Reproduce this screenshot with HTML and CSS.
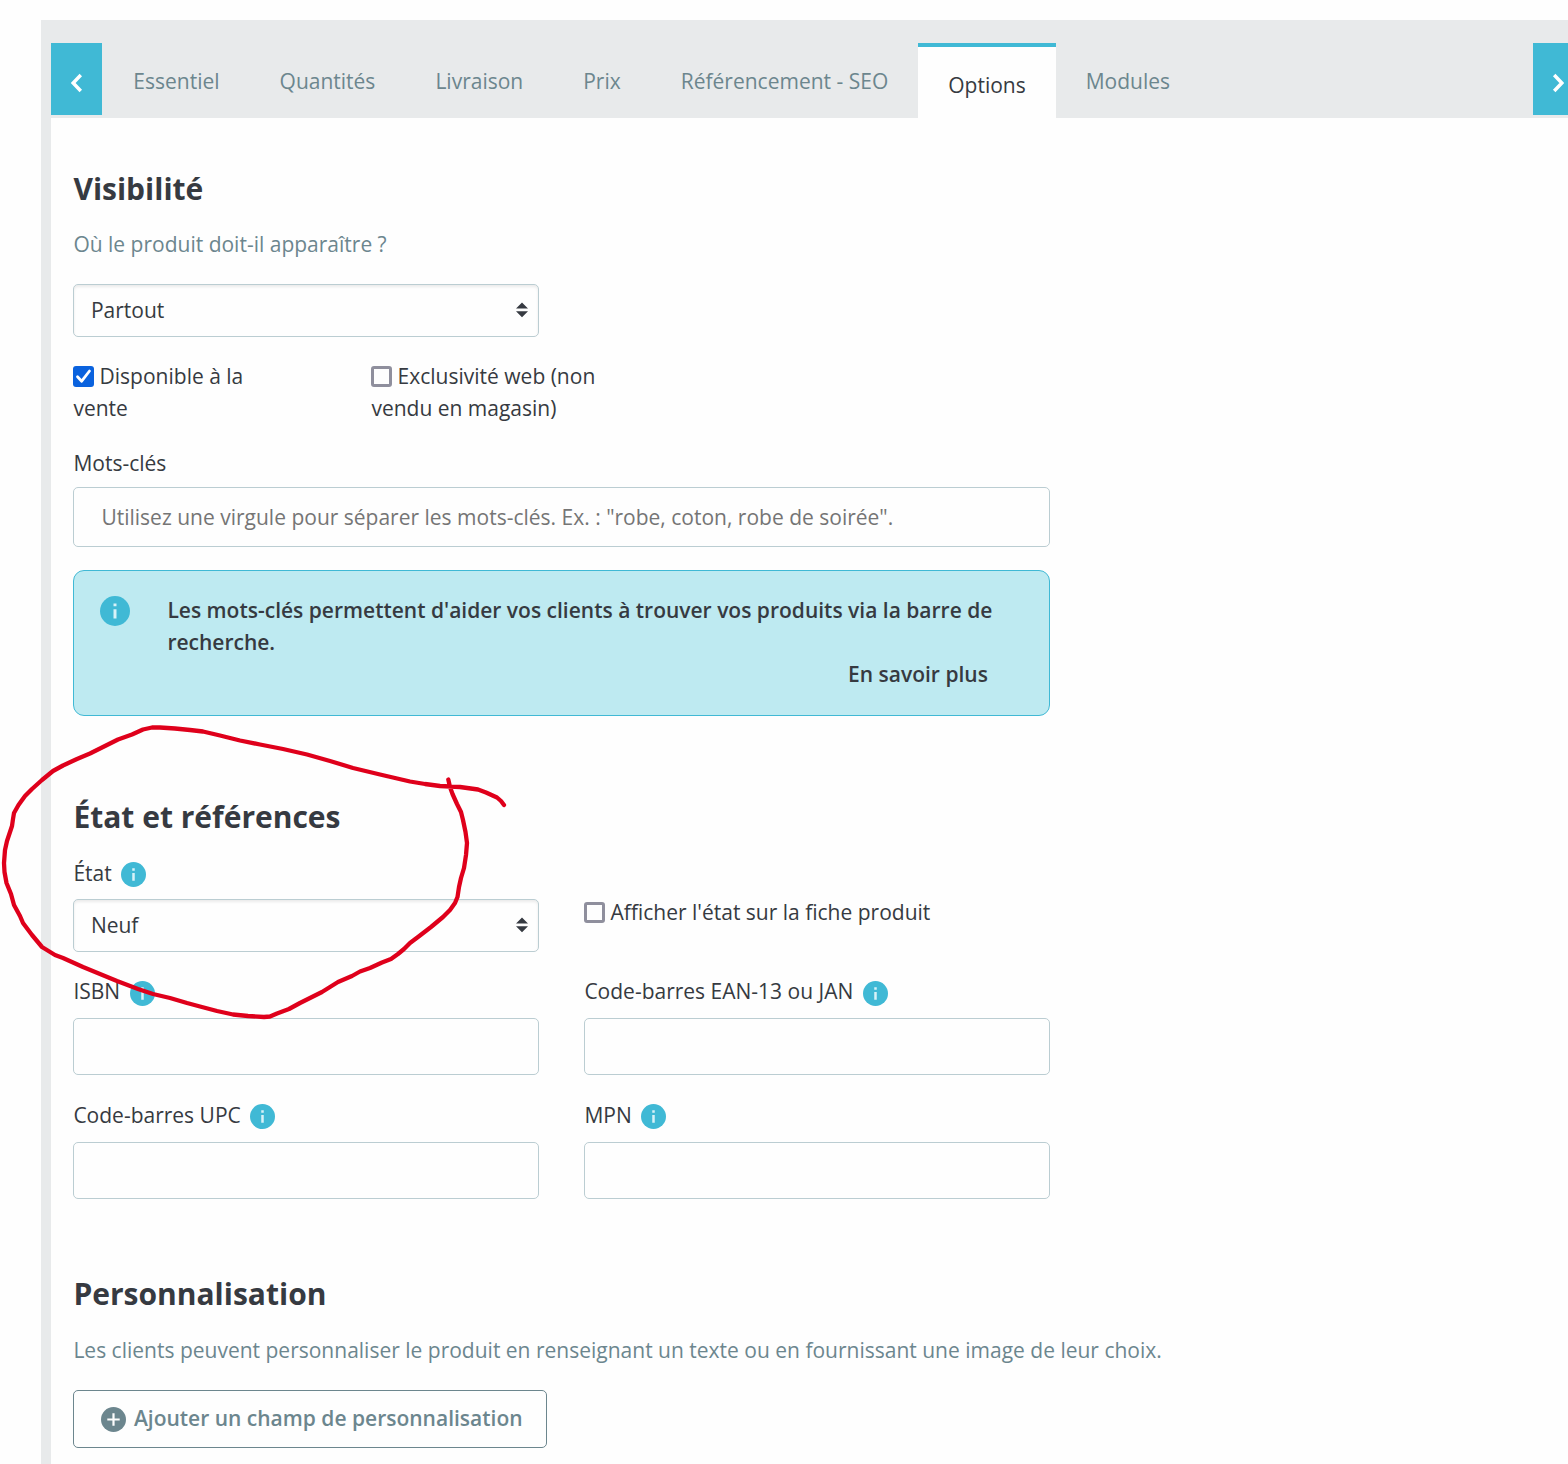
FILE: index.html
```html
<!DOCTYPE html>
<html lang="fr">
<head>
<meta charset="utf-8">
<title>Produit - Options</title>
<link rel="stylesheet" href="styles.css">
</head>
<body>
<svg class="defs" width="0" height="0" aria-hidden="true">
  <symbol id="info" viewBox="2 2 20 20"><circle cx="12" cy="12" r="10" fill="#40b9d5"/><path class="info-mark" d="M11 7h2v1.900h-2zM11 10.800h2V17h-2z"/></symbol>
  <symbol id="sort" viewBox="0 0 12 16"><path d="M6 .5 12 6.500H0zM0 9.300h12L6 15.300z" fill="#363a41"/></symbol>
</svg>
<main class="card">
  <nav class="tabbar">
    <button class="arrow" aria-label="Précédent"><svg width="12" height="20" viewBox="0 0 12 20"><path d="M9.800 2 2.200 10l7.600 8"/></svg></button>
    <div class="tabs">
      <a class="tab">Essentiel</a>
      <a class="tab">Quantités</a>
      <a class="tab">Livraison</a>
      <a class="tab">Prix</a>
      <a class="tab">Référencement - SEO</a>
      <a class="tab active">Options</a>
      <a class="tab">Modules</a>
    </div>
    <button class="arrow next" aria-label="Suivant"><svg width="12" height="20" viewBox="0 0 12 20"><path d="M2.200 2l7.600 8-7.600 8"/></svg></button>
  </nav>
  <div class="content">
    <section class="visibility">
      <h2>Visibilité</h2>
      <p class="subtitle">Où le produit doit-il apparaître ?</p>
      <div class="select"><span>Partout</span><svg width="12" height="16"><use href="#sort"/></svg></div>
      <div class="checks">
        <label class="check"><span class="box checked"><svg width="21" height="21" viewBox="0 0 21 21"><path d="M4.500 10.800l4.200 4.400 7.800-10.200"/></svg></span>Disponible à la vente</label>
        <label class="check"><span class="box"></span>Exclusivité web (non vendu en magasin)</label>
      </div>
      <label class="label">Mots-clés</label>
      <input class="input tags" placeholder="Utilisez une virgule pour séparer les mots-clés. Ex. : &quot;robe, coton, robe de soirée&quot;.">
      <div class="alert">
        <svg class="alert-icon" width="30" height="30"><use href="#info"/></svg>
        <div class="alert-body">
          <p>Les mots-clés permettent d'aider vos clients à trouver vos produits via la barre de recherche.</p>
          <a class="more">En savoir plus</a>
        </div>
      </div>
    </section>
    <section class="references">
      <h2>État et références</h2>
      <div class="grid">
        <div class="field state">
          <div class="label">État <svg class="info" width="25" height="25"><use href="#info"/></svg></div>
          <div class="select"><span>Neuf</span><svg width="12" height="16"><use href="#sort"/></svg></div>
        </div>
        <label class="check show-state"><span class="box"></span>Afficher l'état sur la fiche produit</label>
        <div class="field">
          <div class="label">ISBN <svg class="info low" width="25" height="25"><use href="#info"/></svg></div>
          <input class="input" aria-label="ISBN">
        </div>
        <div class="field">
          <div class="label">Code-barres EAN-13 ou JAN <svg class="info low" width="25" height="25"><use href="#info"/></svg></div>
          <input class="input" aria-label="EAN-13">
        </div>
        <div class="field">
          <div class="label">Code-barres UPC <svg class="info" width="25" height="25"><use href="#info"/></svg></div>
          <input class="input" aria-label="UPC">
        </div>
        <div class="field">
          <div class="label">MPN <svg class="info" width="25" height="25"><use href="#info"/></svg></div>
          <input class="input" aria-label="MPN">
        </div>
      </div>
    </section>
    <section class="custom">
      <h2>Personnalisation</h2>
      <p class="subtitle">Les clients peuvent personnaliser le produit en renseignant un texte ou en fournissant une image de leur choix.</p>
      <button class="add"><svg width="25" height="25" viewBox="0 0 25 25"><circle cx="12.500" cy="12.500" r="12.500" fill="#6c868e"/><path d="M12.500 6.300v12.400M6.300 12.500h12.400" stroke="#fefefe" stroke-width="2.200"/></svg>Ajouter un champ de personnalisation</button>
    </section>
  </div>
</main>
<svg class="markup" width="520" height="310" viewBox="0 715 520 310" aria-hidden="true">
  <polyline points="448.300,779.500 450,787 452.500,794 457,804 461,812 463,820 465.500,832 467,843 466,855 464,868 461,878 459,887 457.500,897 455,903 450,910 443,917 431,927 418,937 410,943 404,949 398,954 391,959 382,962.500 370,968 360,971.500 352,976 338,982 330,987 322,992 300,1003 289,1009 277,1013.500 270,1016.500 264,1017 248,1016 233,1014.500 217,1011 200,1006.500 187,1003 170,998 153,994 138,989 117,981 83,967 63,958 55,955 42,947 32,935 23,923 20,916 14,905 11,894 6.500,883 4.500,872 4,863 5,850 7,841 12,826 13,819 14,813 18.500,805 25,796 32,789 42,780 53,771 63,765.500 77,759 90,753.500 103,747 118,739.500 132,734.500 143,729.500 152,727.500 160,727.500 175,728.500 190,730 203,731.500 220,735.500 240,740.500 260,744.500 283,749 307,754.500 330,761 353,768 380,774.500 410,781.500 425,784 440,786 460,787 478,789.500 486,792.500 497,797.500 501,801 504,805"/>
</svg>
</body>
</html>
```
FILE: styles.css
```css
* { box-sizing: border-box; }
body {
  margin: 0;
  height: 1464px;
  position: relative;
  overflow: hidden;
  background: #fefefe;
  color: #363a41;
  font: 21px/32px "Open Sans", "Noto Sans", sans-serif;
}
.defs { position: absolute; }
.card {
  margin: 20px 0 0 41px;
  height: 1444px;
  border-left: 10px solid #e8eaeb;
  background: #fefefe;
}
.tabbar {
  display: flex;
  align-items: flex-start;
  height: 98px;
  padding-top: 23px;
  background: #e8eaeb;
}
.arrow {
  display: flex;
  align-items: center;
  justify-content: center;
  width: 51px;
  height: 72px;
  padding: 8px 0 0;
  border: 0;
  background: #40b9d5;
}
.arrow path { fill: none; stroke: #fff; stroke-width: 3.4; }
.next { width: 35px; padding-left: 15px; }
.tabs { display: flex; flex: 1; padding-left: 1.300px; height: 75px; }
.tab { padding: 22px 30px 0; color: #6c868e; white-space: nowrap; }
.active { border-top: 4px solid #40b9d5; background: #fefefe; color: #363a41; }
.content { padding: 53px 0 0 22.400px; }
h2 { margin: 0; font-size: 30px; line-height: 36px; font-weight: 700; }
p { margin: 0; }
.subtitle { margin: 21px 0 24px; color: #6c868e; }
.select {
  display: flex;
  align-items: center;
  justify-content: space-between;
  width: 466px;
  height: 53px;
  padding: 0 10px 1px 16.500px;
  border: 1px solid #bbcdd2;
  border-radius: 5px;
  box-shadow: inset 0 2px 3px rgba(0, 0, 0, .08);
}
.checks { display: flex; gap: 70px; margin: 23px 0; }
.check { display: block; width: 228px; }
.box {
  display: inline-block;
  width: 21px;
  height: 21px;
  margin-right: 5.200px;
  vertical-align: -3px;
  border: 3px solid #8f8f9d;
  border-radius: 3px;
}
.checked { border: 0; background: #0a62de; }
.box svg { display: block; }
.box path { fill: none; stroke: #fff; stroke-width: 2.800; stroke-linecap: round; stroke-linejoin: round; }
.label { display: flex; align-items: center; gap: 9.500px; height: 32px; }
.info { margin-top: 2px; }
.low { margin-top: 4px; }
.info-mark { fill: #d8f2f8; }
.input {
  display: block;
  width: 100%;
  height: 57px;
  margin: 11px 0 0;
  padding: 0 27px;
  border: 1px solid #bbcdd2;
  border-radius: 5px;
  background: #fefefe;
  font: inherit;
  outline: 0;
}
.input::placeholder { color: #757575; opacity: 1; }
.tags { width: 977px; height: 60px; margin-top: 8px; }
.alert {
  display: flex;
  align-items: flex-start;
  gap: 37px;
  width: 977px;
  height: 146px;
  margin-top: 23px;
  padding: 23px 50px 0 26px;
  border: 1px solid #40b9d5;
  border-radius: 11px;
  background: #beeaf1;
  font-weight: 600;
}
.alert-icon { flex: none; margin-top: 2px; }
.alert-body { display: flex; flex-direction: column; flex: 1; }
.more { align-self: flex-end; margin-right: 11.500px; }
.references { margin-top: 83px; }
.grid { display: grid; grid-template-columns: 466px 466px; column-gap: 45px; row-gap: 24px; margin-top: 22px; }
.state { margin-bottom: -1px; }
.state .select { margin-top: 10px; }
.show-state { width: auto; padding-top: 39px; }
.custom { margin-top: 77px; }
.custom .subtitle { margin: 22px 0 24px; }
.add {
  display: flex;
  align-items: center;
  gap: 7.500px;
  width: 474px;
  height: 58px;
  padding: 0 0 2px 27px;
  border: 1px solid #6c868e;
  border-radius: 5px;
  background: #fefefe;
  color: #6c868e;
  font: inherit;
  font-weight: 600;
  white-space: nowrap;
}
.add svg { flex: none; margin-top: 3px; }
.markup { position: absolute; left: 0; top: 715px; pointer-events: none; }
.markup polyline { fill: none; stroke: #df001b; stroke-width: 4.300; stroke-linecap: round; stroke-linejoin: round; }
```
